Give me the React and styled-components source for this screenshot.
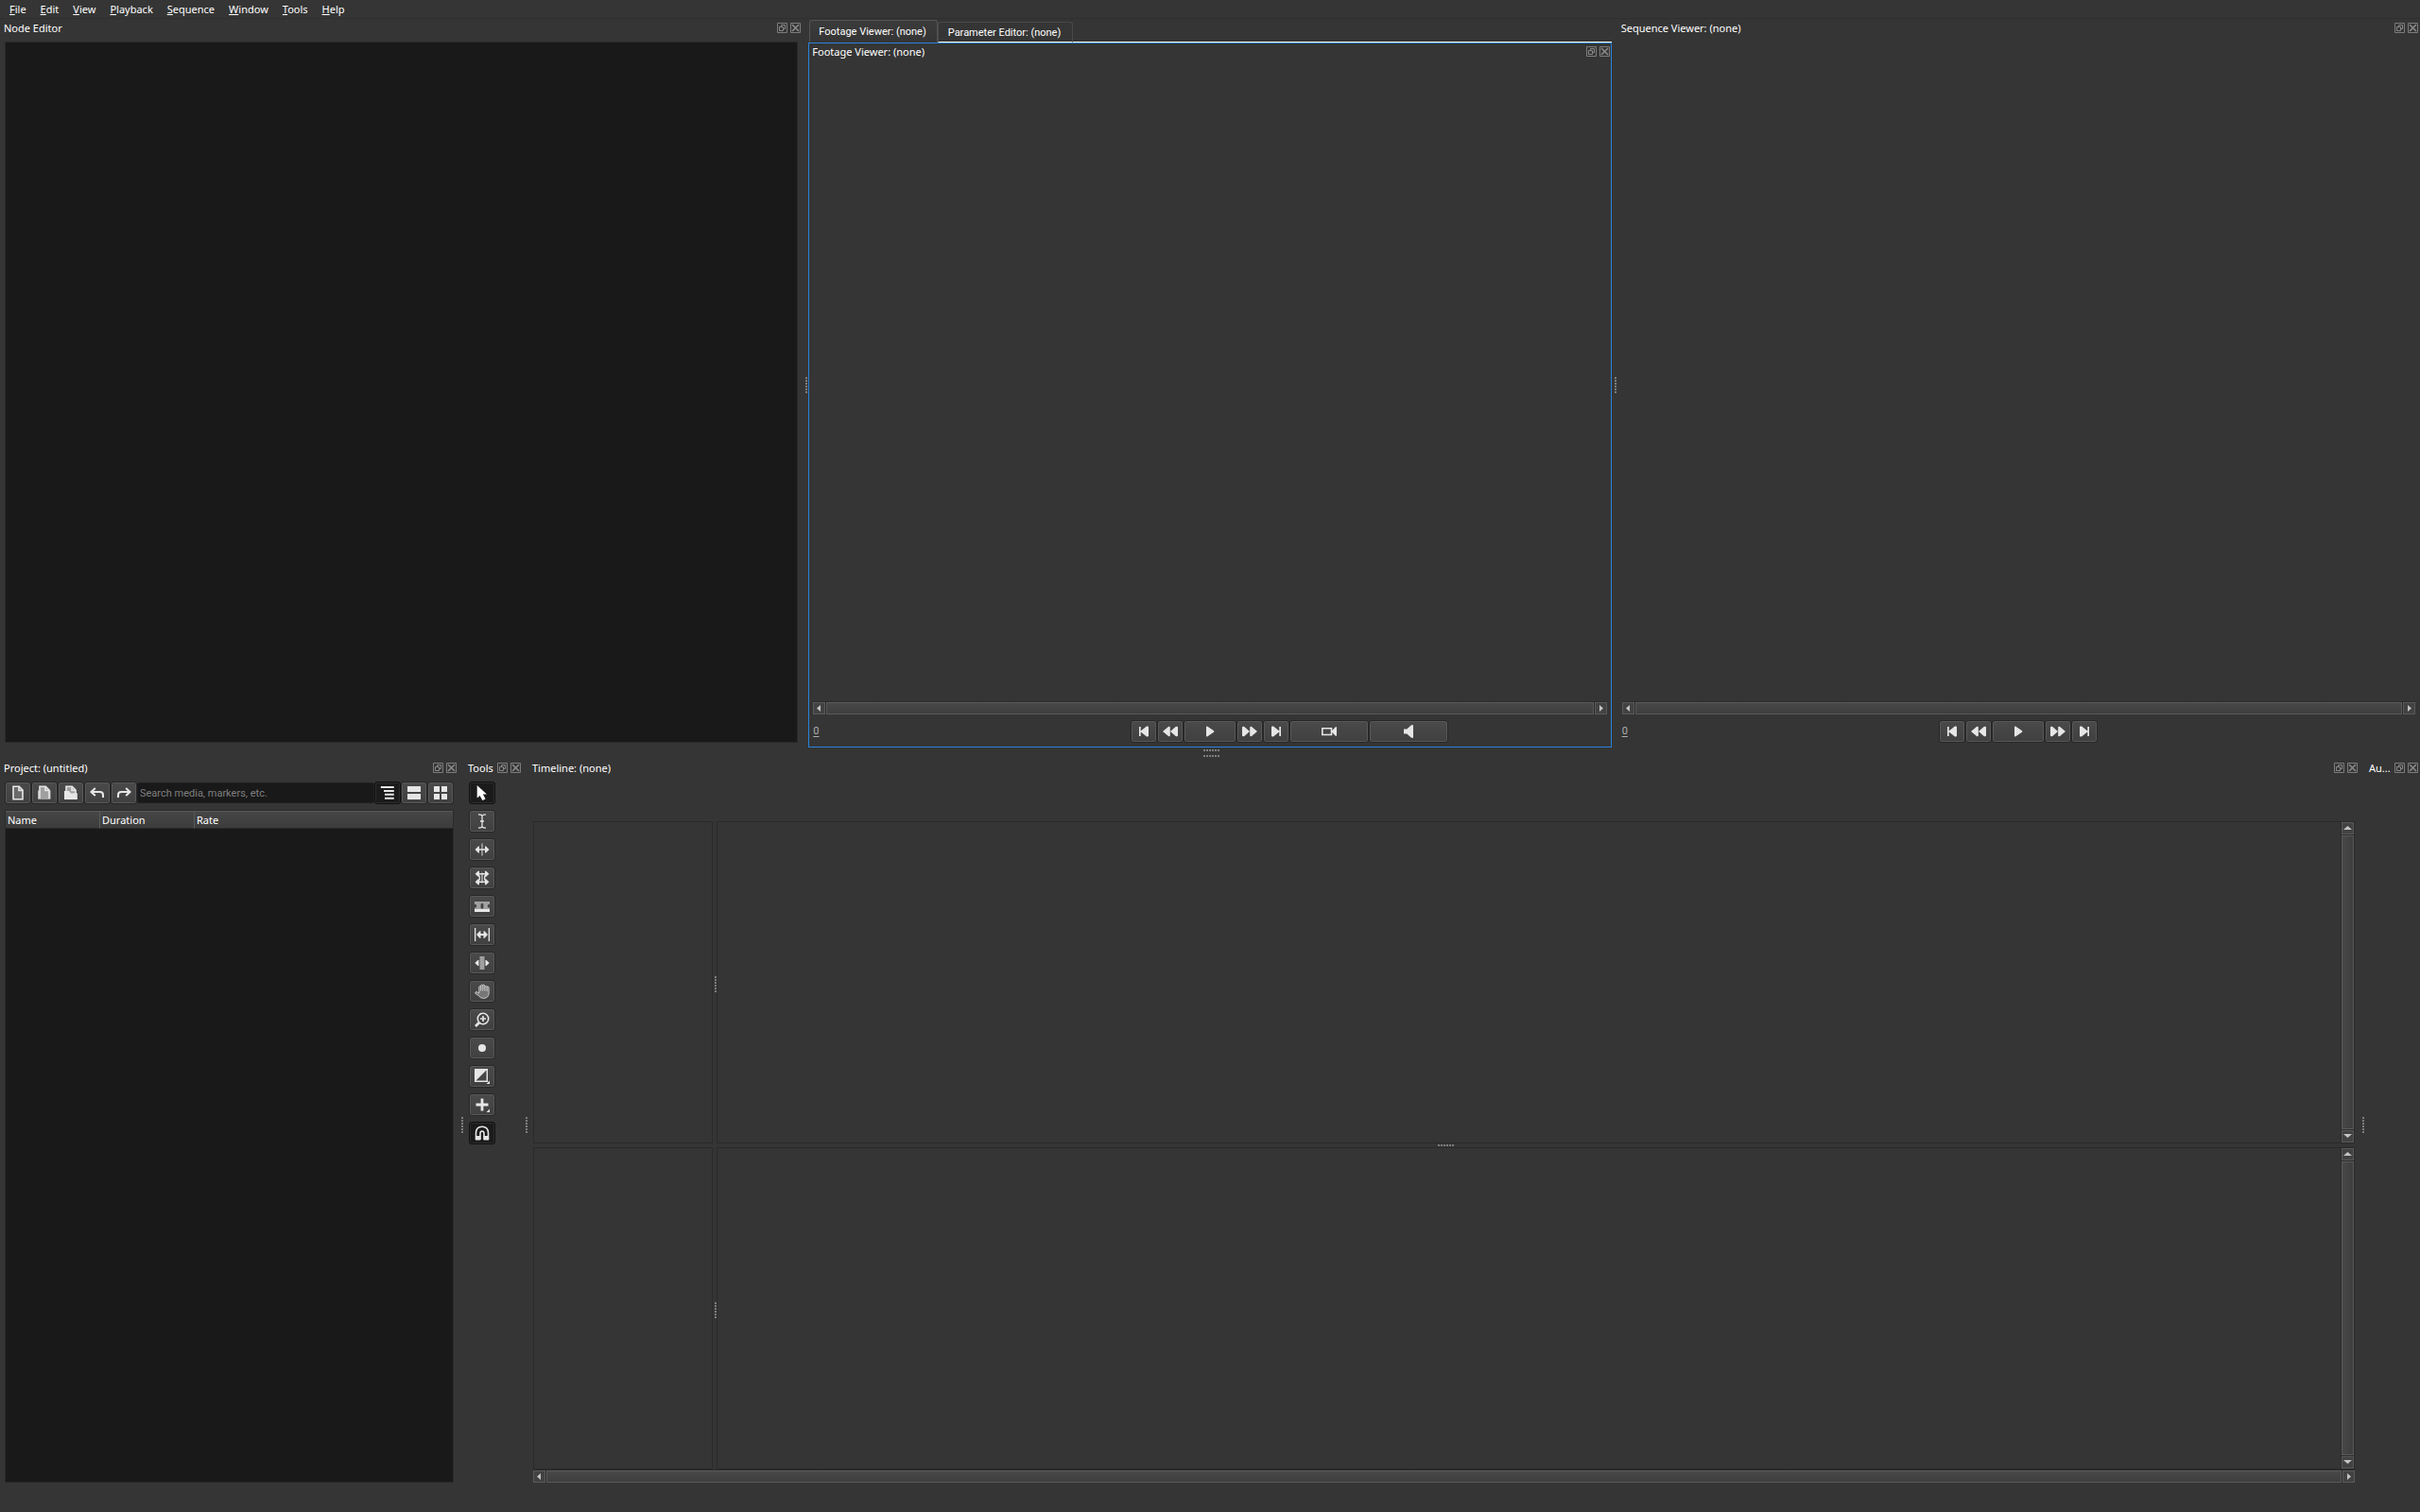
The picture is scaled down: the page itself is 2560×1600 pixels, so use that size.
import { useState } from "react";
import styled, { createGlobalStyle, css } from "styled-components";

const color = {
  window: "#353535",
  base: "#191919",
  outline: "#2a2a2a",
  edge: "#5a5a5a",
  icon: "#e6e6e6",
  iconDim: "#a0a0a0",
  focus: "#2a82da",
};

const narrowFont = `Roboto, "Open Sans", sans-serif`;

const GlobalStyle = createGlobalStyle`
  * {
    box-sizing: border-box;
  }
  body {
    margin: 0;
    background: ${color.window};
    color: #fff;
    font-family: "Noto Sans", "Open Sans", sans-serif;
    font-size: 11px;
    line-height: 16px;
    overflow: hidden;
  }
  button, input {
    font: inherit;
    color: inherit;
    margin: 0;
  }
  svg {
    display: block;
    flex: none;
  }
`;

const Window = styled.div`
  display: flex;
  flex-direction: column;
  height: 100vh;
  padding-bottom: 26px;
`;

const MenuBar = styled.nav`
  display: flex;
  flex: none;
  gap: 1px;
  height: 20px;
  padding-left: 3px;
  border-bottom: 1px solid #2f2f2f;
`;

const MenuItem = styled.button`
  padding: 1px 7px 0;
  border: 0;
  background: none;
  white-space: nowrap;
  &::first-letter {
    text-decoration: underline;
  }
`;

const DockRow = styled.div`
  display: grid;
  grid-template-columns: ${({ $columns }) => $columns};
  grid-template-rows: minmax(0, 1fr);
  flex: 1 1 0;
  min-height: 0;
`;

const Dock = styled.section`
  display: flex;
  flex-direction: column;
  flex: 1;
  min-width: 0;
  min-height: 0;
  border: 1px solid ${({ $active }) => ($active ? color.focus : "transparent")};
`;

const TabGroup = styled.div`
  display: flex;
  flex-direction: column;
  min-width: 0;
`;

const TabBar = styled.div`
  display: flex;
  align-items: flex-end;
  flex: none;
  height: 25px;
  padding-left: 1px;
  &::after {
    content: "";
    flex: 1;
    border-bottom: 1px solid #fff;
  }
`;

const Tab = styled.button`
  height: 22px;
  padding: 1px 12px 0 10px;
  border: 1px solid #4a4a4a;
  border-bottom: 1px solid #fff;
  border-radius: 3px 3px 0 0;
  background: ${color.window};
  font-family: ${narrowFont};
  white-space: nowrap;
  ${({ $current }) =>
    $current &&
    css`
      height: 24px;
      padding: 0 11px 0 9px;
      border-color: #545454;
      border-bottom: 0;
      background: linear-gradient(#3b3b3b, ${color.window});
    `}
`;

const TitleBar = styled.header`
  display: flex;
  align-items: center;
  flex: none;
  gap: 3px;
  height: 17px;
  padding: 0 1px 0 3px;
`;

const Title = styled.h2`
  flex: 1;
  min-width: 0;
  margin: 0;
  font: inherit;
  white-space: nowrap;
`;

const TitleButton = styled.button`
  flex: none;
  width: 11px;
  height: 11px;
  padding: 0;
  border: 0;
  background: none;
`;

const Body = styled.div`
  display: flex;
  flex-direction: column;
  flex: 1;
  min-height: 0;
  padding: 6px 4px 4px;
`;

const Canvas = styled.div`
  flex: 1;
  border: 1px solid ${color.outline};
  background: ${color.base};
`;

const dots = (direction) =>
  `repeating-linear-gradient(${direction}, #7e7e7e 0 2px, transparent 2px 3px)`;

const Splitter = styled.div`
  display: flex;
  flex: none;
  width: ${({ $size = 6 }) => $size}px;
  padding: 3px 0 0 2px;
  align-items: center;
  justify-content: center;
  cursor: col-resize;
  &::after {
    content: "";
    width: 2px;
    height: 17px;
    background: ${dots("to bottom")};
  }
`;

const RowSplitter = styled.div`
  display: flex;
  flex: none;
  flex-direction: column;
  align-items: center;
  justify-content: center;
  gap: 4px;
  height: ${({ $size }) => $size}px;
  padding-left: 3px;
  cursor: row-resize;
  &::before,
  &::after {
    content: "";
    width: 17px;
    height: 2px;
    background: ${dots("to right")};
  }
  &::before {
    display: ${({ $double }) => ($double ? "block" : "none")};
  }
`;

const ToolButton = styled.button`
  display: flex;
  align-items: center;
  justify-content: center;
  flex: none;
  width: ${({ $width = 28 }) => $width}px;
  height: 24px;
  padding: 0;
  border: 1px solid #272727;
  border-radius: 3px;
  background: linear-gradient(#4a4a4a, #404040);
  box-shadow: inset 0 0 0 1px #585858;
  ${({ $on }) =>
    $on &&
    css`
      border-color: #111;
      background: #1b1b1b;
      box-shadow: inset 0 0 0 1px #2c2c2c;
    `}
`;

const ScrollTrack = styled.div`
  display: flex;
  flex: none;
  flex-direction: ${({ $vertical }) => ($vertical ? "column" : "row")};
  gap: 1px;
  ${({ $vertical }) =>
    $vertical
      ? "width: 14px; padding-left: 1px;"
      : "height: 14px; padding-top: 1px;"}
  background: ${color.outline};
`;

const ScrollArrow = styled.button`
  display: flex;
  align-items: center;
  justify-content: center;
  flex: none;
  width: 13px;
  height: 13px;
  padding: 0;
  border: 1px solid ${color.edge};
  background: #424242;
`;

const ScrollThumb = styled.div`
  flex: 1;
  border: 1px solid ${color.edge};
  background: linear-gradient(
    ${({ $vertical }) => ($vertical ? "to right" : "to bottom")},
    #484848,
    #3e3e3e
  );
`;

const Viewport = styled.div`
  flex: 1;
`;

const Controls = styled.div`
  display: grid;
  grid-template-columns: 1fr auto 1fr;
  align-items: center;
  flex: none;
  margin-top: 6px;
`;

const Timecode = styled.output`
  justify-self: start;
  color: #b0b0b0;
  font-family: ${narrowFont};
  text-decoration: underline;
  text-underline-offset: 2px;
`;

const ButtonGroup = styled.div`
  display: flex;
`;

const SearchInput = styled.input`
  flex: 1;
  min-width: 0;
  height: 22px;
  padding: 0 2px;
  border: 1px solid #202020;
  border-radius: 2px;
  background: ${color.base};
  font-family: ${narrowFont};
  outline: 0;
  &::placeholder {
    color: #808080;
  }
`;

const ProjectToolbar = styled.div`
  display: flex;
  align-items: center;
  flex: none;
  margin-bottom: 6px;
`;

const ProjectTree = styled.div`
  flex: 1;
  border: 1px solid ${color.outline};
  background: ${color.base};
`;

const TreeTable = styled.table`
  width: 100%;
  border-collapse: separate;
  border-spacing: 0;
  table-layout: fixed;
  th {
    height: 19px;
    padding: 0 2px;
    border-top: 1px solid ${color.edge};
    border-right: 1px solid ${color.edge};
    border-bottom: 1px solid ${color.outline};
    background: linear-gradient(#464646, #3c3c3c);
    font-weight: 400;
    text-align: left;
    line-height: 16px;
  }
  th:last-child {
    border-right: 0;
  }
`;

const Column = styled.col`
  width: ${({ $width }) => $width};
`;

const ToolList = styled.div`
  display: flex;
  flex-direction: column;
  gap: 6px;
`;

const TimeRuler = styled.div`
  flex: none;
  height: 42px;
`;

const TrackArea = styled.div`
  display: flex;
  flex: 1 1 0;
  min-height: 0;
`;

const TrackHeads = styled.div`
  flex: none;
  width: 190px;
  border: 1px solid ${color.outline};
`;

const Tracks = styled.div`
  display: flex;
  justify-content: flex-end;
  flex: 1;
  border: 1px solid ${color.outline};
`;

const Svg = ({ size = 16, children }) => (
  <svg
    width={size}
    height={size}
    viewBox={`0 0 ${size} ${size}`}
    fill={color.icon}
    aria-hidden="true"
  >
    {children}
  </svg>
);

const line = { fill: "none", stroke: color.icon, strokeWidth: 1.6 };

const icons = {
  start: <path d="M3 3h1.7v4.6L11 2.6q2-.6 2 1v8.8q0 1.6-2 1L4.7 8.4V13H3z" />,
  rewind: (
    <path d="M0 8 6 3.1q1.8-.8 1.8 1v7.8q0 1.8-1.8 1zM8 8l5.7-4.9q2.3-.8 2.3 1v7.8q0 1.8-2.3 1z" />
  ),
  play: <path d="M4 3.5q0-1.4 1.4-.8L12 7.2q.8.8 0 1.6l-6.6 4.5q-1.4.6-1.4-.8z" />,
  forward: (
    <path d="M16 8l-6-4.9q-1.8-.8-1.8 1v7.8q0 1.8 1.8 1zM8 8 2.3 3.1Q0 2.3 0 4.1v7.8q0 1.8 2.3 1z" />
  ),
  end: <path d="M13 3h-1.7v4.6L5 2.6q-2-.6-2 1v8.8q0 1.6 2 1l6.3-5V13H13z" />,
  video: (
    <>
      <path d="M.8 4.7h9.7v6.8H.8z" {...line} />
      <path d="M10.500 6.800h1L14.800 3.300H16v9.400h-1.200L11.500 9.200h-1z" />
    </>
  ),
  audio: <path d="M3 5.5h3.3L11 1.2h2v13.6h-2l-4.7-4.3H3z" />,
  newProject: (
    <>
      <path d="M3 1.2h6.3L13 5v9.8H3z" {...line} fill="#6a6a6a" />
      <path d="M9 1.2V5.4h4" {...line} />
    </>
  ),
  openProject: (
    <>
      <path d="M1 5.5h13.5v9.3H1z" fill="#b5b5b5" />
      <path d="M3 14V1.2h6.3L13 5v9" {...line} fill={color.iconDim} />
      <path d="M9 1.2V5.4h4" {...line} />
    </>
  ),
  saveProject: (
    <>
      <path d="M3 8V1.2h6.3L13 5v4" {...line} fill={color.iconDim} />
      <path d="M9 1.2V5.4h4" {...line} />
      <path d="M1 6h5l1.8 2.2h7V15H1z" />
    </>
  ),
  undo: (
    <path
      d="M5.8 3 1.5 7l4.3 4M1.5 7h9.2q3.3 0 3.3 3.2V13"
      {...line}
      strokeWidth="2"
    />
  ),
  redo: (
    <path
      d="M10.2 3l4.3 4-4.3 4M14.5 7H5.3Q2 7 2 10.2V13"
      {...line}
      strokeWidth="2"
    />
  ),
  tree: (
    <path d="M.8 1h14v2H.8zM4 4.9h10.8v2H4zM5 8.8h9.8v2H5zM5 12.7h9.8v2H5z" />
  ),
  list: <path d="M1 1h14v6H1zM1 9h14v6H1z" />,
  grid: <path d="M1 1h6v6H1zM9 1h6v6H9zM1 9h6v6H1zM9 9h6v6H9z" />,
  pointer: (
    <path
      d="M2.7 0v13.6l2.9-2.7 2.8 5 3.2-1.4-2.7-5h4z"
      fill="#fff"
    />
  ),
  edit: (
    <path
      d="M4 .8q3.2 0 4 1.5.8-1.5 4-1.5M8 2.3v11.4M4 15.2q3.2 0 4-1.5.8 1.5 4 1.5M6 8h4"
      {...line}
      strokeWidth="1.3"
    />
  ),
  ripple: (
    <>
      <path d="M7.3 1.5h1.4v13H7.300z" fill="#b4b4b4" />
      <path d="M.5 8 4 4.500h1v2.700h6V4.500h1L15.500 8 12 11.500h-1V8.800H5v2.700H4z" />
    </>
  ),
  rolling: (
    <>
      <path d="M8 2.500v11" {...line} stroke="#c0c0c0" strokeWidth="1.400" />
      <path d="M5.300 5.500v5M10.700 5.500v5" {...line} strokeWidth="1.300" />
      <path d="M.6 3.800 3.800.8H5v2.200h6V.8h1.200l3.200 3-3.200 3H11V4.600H5v2.200H3.800zM.6 12.200l3.200-3H5v2.200h6V9.200h1.200l3.200 3-3.200 3H11V13H5v2.200H3.800z" />
    </>
  ),
  razor: (
    <>
      <path
        d="M0 3h16v2.7q-2.3.2-2.3 2t2.3 2V11H0V9.7q2.3-.2 2.3-2T0 5.7zM8 4.8c-1 0-1.5 1.2-1.5 3s.5 3 1.5 3 1.5-1.2 1.5-3-.5-3-1.5-3z"
        fill={color.iconDim}
        fillRule="evenodd"
      />
      <path d="M0 11h16v3H0z" />
    </>
  ),
  slip: (
    <>
      <path d="M0 1h1.3v14H0zM14.7 1H16v14h-1.3z" />
      <path d="M2 8l3.500-3.700h1v2.800h3V4.300h1L14 8l-3.500 3.700h-1V8.900h-3v2.800h-1z" />
    </>
  ),
  slide: (
    <>
      <path d="M.3 8 3.500 5h1v6h-1zM15.700 8l-3.200-3h-1v6h1z" />
      <path d="M5.500 1h5v14h-5z" fill={color.iconDim} />
    </>
  ),
  hand: (
    <path
      d="M4.8 9V3.2q.8-1.6 1.9 0V1.7q1-1.6 2.1 0v-.3q1.1-1.2 2.1.5v1.3q1.2-1.4 2.2.2V2.9q2-.4 2 1.6v6q-.6 4.8-5.6 4.9-3.4 0-5.4-3L.8 10.2Q.5 8.4 2.3 8.6L4.8 10zM6.7 3v4.5M8.8 2v5.5M10.9 3v4.5M13.1 4v4"
      fill="#777"
      stroke="#d4d4d4"
      strokeWidth=".9"
    />
  ),
  zoom: (
    <>
      <circle cx="9" cy="7" r="5.7" {...line} />
      <path d="M5 11l-4 4" {...line} strokeWidth="2.6" />
      <path d="M9 4v6M6 7h6" {...line} />
    </>
  ),
  record: <circle cx="8" cy="8" r="4" />,
  transition: (
    <>
      <path d="M.7.7h12.6v12.6H.7z" {...line} strokeWidth="1.4" />
      <path d="M1 1h12L1 13z" />
      <path d="M16 12.5V16h-3.5z" />
    </>
  ),
  add: (
    <>
      <path d="M8 1.5v13M1.5 8h13" {...line} strokeWidth="2.8" />
      <path d="M16 12.5V16h-3.5z" />
    </>
  ),
  snap: (
    <>
      <path d="M1.5 15V8Q1.5 1.2 8 1.2T14.5 8v7M6 15V8.3Q6 6 8 6t2 2.3V15" {...line} />
      <path d="M1 11h5.2v4.5H1zM9.8 11H15v4.5H9.8z" />
    </>
  ),
};

const titleLine = { fill: "none", stroke: "#888", strokeWidth: 1 };

const TitleIcon = ({ close }) => (
  <Svg size={11}>
    <path d="M.5.5h10v10H.5z" {...titleLine} stroke="#7c7c7c" />
    {close ? (
      <path d="M2 2l7 7M9 2L2 9" {...titleLine} strokeWidth="1.7" />
    ) : (
      <path d="M2.5 4.5h4v4h-4zM4.5 4V2.5h4v4H7" {...titleLine} />
    )}
  </Svg>
);

const arrows = {
  left: "M6 1v7L2 4.5z",
  right: "M3 1v7l4-3.5z",
  up: "M0 6h9L4.5 2z",
  down: "M0 2h9L4.5 6z",
};

const ScrollBar = ({ vertical, label }) => {
  const [back, ahead] = vertical ? ["up", "down"] : ["left", "right"];
  return (
    <ScrollTrack $vertical={vertical} aria-label={label}>
      <ScrollArrow aria-label={`Scroll ${back}`}>
        <Svg size={9}>
          <path d={arrows[back]} fill="#c4c4c4" />
        </Svg>
      </ScrollArrow>
      <ScrollThumb $vertical={vertical} />
      <ScrollArrow aria-label={`Scroll ${ahead}`}>
        <Svg size={9}>
          <path d={arrows[ahead]} fill="#c4c4c4" />
        </Svg>
      </ScrollArrow>
    </ScrollTrack>
  );
};

const IconButton = ({ icon, label, width, on, onClick }) => (
  <ToolButton $width={width} $on={on} aria-label={label} onClick={onClick}>
    <Svg>{icons[icon]}</Svg>
  </ToolButton>
);

const Panel = ({ title, active, children }) => (
  <Dock $active={active}>
    <TitleBar>
      <Title>{title}</Title>
      <TitleButton aria-label="Float">
        <TitleIcon />
      </TitleButton>
      <TitleButton aria-label="Close">
        <TitleIcon close />
      </TitleButton>
    </TitleBar>
    <Body>{children}</Body>
  </Dock>
);

const transport = [
  { icon: "start", label: "Go to start" },
  { icon: "rewind", label: "Previous frame" },
  { icon: "play", label: "Play", width: 56 },
  { icon: "forward", label: "Next frame" },
  { icon: "end", label: "Go to end" },
];

const Viewer = ({ footage }) => (
  <>
    <Viewport />
    <ScrollBar label="Time" />
    <Controls>
      <Timecode>0</Timecode>
      <ButtonGroup>
        {transport.map((item) => (
          <IconButton key={item.icon} {...item} />
        ))}
      </ButtonGroup>
      {footage && (
        <ButtonGroup>
          <IconButton icon="video" label="Drag video" width={84} />
          <IconButton icon="audio" label="Drag audio" width={84} />
        </ButtonGroup>
      )}
    </Controls>
  </>
);

const projectActions = [
  { icon: "newProject", label: "New" },
  { icon: "openProject", label: "Open" },
  { icon: "saveProject", label: "Save" },
  { icon: "undo", label: "Undo" },
  { icon: "redo", label: "Redo" },
];

const Project = () => {
  const [view, setView] = useState("tree");

  return (
    <>
      <ProjectToolbar>
        {projectActions.map((item) => (
          <IconButton key={item.icon} {...item} />
        ))}
        <SearchInput
          type="text"
          aria-label="Search"
          placeholder="Search media, markers, etc."
        />
        {["tree", "list", "grid"].map((name) => (
          <IconButton
            key={name}
            icon={name}
            label={`${name} view`}
            on={view === name}
            onClick={() => setView(name)}
          />
        ))}
      </ProjectToolbar>
      <ProjectTree>
        <TreeTable>
          <colgroup>
            <Column $width="100px" />
            <Column $width="100px" />
            <Column $width="auto" />
          </colgroup>
          <thead>
            <tr>
              <th scope="col">Name</th>
              <th scope="col">Duration</th>
              <th scope="col">Rate</th>
            </tr>
          </thead>
        </TreeTable>
      </ProjectTree>
    </>
  );
};

const tools = [
  "pointer",
  "edit",
  "ripple",
  "rolling",
  "razor",
  "slip",
  "slide",
  "hand",
  "zoom",
  "record",
  "transition",
  "add",
];

const Toolbox = () => {
  const [tool, setTool] = useState("pointer");
  const [snapping, setSnapping] = useState(true);

  return (
    <ToolList>
      {tools.map((name) => (
        <IconButton
          key={name}
          icon={name}
          label={`${name} tool`}
          on={tool === name}
          onClick={() => setTool(name)}
        />
      ))}
      <IconButton
        icon="snap"
        label="Toggle snapping"
        on={snapping}
        onClick={() => setSnapping(!snapping)}
      />
    </ToolList>
  );
};

const TrackView = () => (
  <TrackArea>
    <TrackHeads />
    <Splitter role="separator" $size={4} />
    <Tracks>
      <ScrollBar vertical label="Tracks" />
    </Tracks>
  </TrackArea>
);

const menus = [
  "File",
  "Edit",
  "View",
  "Playback",
  "Sequence",
  "Window",
  "Tools",
  "Help",
];

export default function App() {
  return (
    <>
      <GlobalStyle />
      <Window>
        <MenuBar>
          {menus.map((menu) => (
            <MenuItem key={menu}>{menu}</MenuItem>
          ))}
        </MenuBar>

        <DockRow $columns="minmax(0, 1fr) 6px minmax(0, 1fr) 6px minmax(0, 1fr)">
          <Panel title="Node Editor">
            <Canvas />
          </Panel>
          <Splitter role="separator" />
          <TabGroup>
            <TabBar role="tablist">
              <Tab role="tab" aria-selected="true" $current>
                Footage Viewer: (none)
              </Tab>
              <Tab role="tab" aria-selected="false">
                Parameter Editor: (none)
              </Tab>
            </TabBar>
            <Panel title="Footage Viewer: (none)" active>
              <Viewer footage />
            </Panel>
          </TabGroup>
          <Splitter role="separator" />
          <Panel title="Sequence Viewer: (none)">
            <Viewer />
          </Panel>
        </DockRow>

        <RowSplitter role="separator" $size={12} $double />

        <DockRow $columns="485px 6px 62px 6px minmax(0, 1fr) 6px 58px">
          <Panel title="Project: (untitled)">
            <Project />
          </Panel>
          <Splitter role="separator" />
          <Panel title="Tools">
            <Toolbox />
          </Panel>
          <Splitter role="separator" />
          <Panel title="Timeline: (none)">
            <TimeRuler />
            <TrackView />
            <RowSplitter role="separator" $size={4} />
            <TrackView />
            <ScrollBar label="Time" />
          </Panel>
          <Splitter role="separator" />
          <Panel title="Au..." />
        </DockRow>
      </Window>
    </>
  );
}
